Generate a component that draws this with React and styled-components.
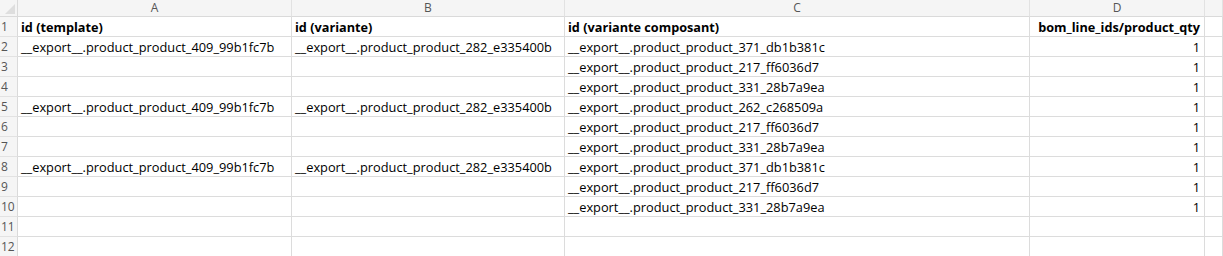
import React from "react";
import styled, { createGlobalStyle } from "styled-components";

const Global = createGlobalStyle`
  html, body {
    margin: 0;
    padding: 0;
    background: #ffffff;
  }
  body {
    font-family: "Open Sans", "Liberation Sans", sans-serif;
  }
`;

const Sheet = styled.div`
  display: grid;
  grid-template-columns: 18px 274px 273px 465px 175px 1fr;
  grid-template-rows: 17px;
  grid-auto-rows: 20px;
  width: 1223px;
  height: 256px;
  overflow: hidden;
`;

const Corner = styled.div`
  position: relative;
  background: #f5f5f5;
  border-right: 1px solid #dadada;
  border-bottom: 1px solid #dadada;
  box-sizing: border-box;
  &::after {
    content: "";
    position: absolute;
    right: 2px;
    bottom: 2px;
    width: 0;
    height: 0;
    border-left: 10px solid transparent;
    border-bottom: 10px solid #dedede;
  }
`;

const ColHead = styled.div`
  display: flex;
  align-items: center;
  justify-content: center;
  background: #f5f5f5;
  border-right: 1px solid #e2e2e2;
  border-bottom: 1px solid #dadada;
  box-sizing: border-box;
  color: #555;
  font-size: 12px;
  line-height: 1;
`;

const RowHead = styled.div`
  display: flex;
  align-items: center;
  padding-left: 1px;
  background: #f5f5f5;
  border-right: 1px solid #dadada;
  border-bottom: 1px solid #e2e2e2;
  box-sizing: border-box;
  color: #555;
  font-size: 12px;
  overflow: visible;
  white-space: nowrap;
`;

const Cell = styled.div`
  display: flex;
  align-items: center;
  justify-content: ${(p) => (p.$num ? "flex-end" : "flex-start")};
  padding: 0 ${(p) => (p.$num ? "4px" : "3px")};
  border-right: 1px solid #dcdcdc;
  border-bottom: 1px solid #dcdcdc;
  box-sizing: border-box;
  color: #000;
  font-size: ${(p) => (p.$bold ? "12.7px" : "12.8px")};
  font-weight: ${(p) => (p.$bold ? 700 : 400)};
  white-space: nowrap;
  overflow: hidden;
`;

const header = ["id (template)", "id (variante)", "id (variante composant)", "bom_line_ids/product_qty", ""];

const T = "__export__.product_product_409_99b1fc7b";
const V = "__export__.product_product_282_e335400b";

const rows = [
  [T, V, "__export__.product_product_371_db1b381c", "1"],
  ["", "", "__export__.product_product_217_ff6036d7", "1"],
  ["", "", "__export__.product_product_331_28b7a9ea", "1"],
  [T, V, "__export__.product_product_262_c268509a", "1"],
  ["", "", "__export__.product_product_217_ff6036d7", "1"],
  ["", "", "__export__.product_product_331_28b7a9ea", "1"],
  [T, V, "__export__.product_product_371_db1b381c", "1"],
  ["", "", "__export__.product_product_217_ff6036d7", "1"],
  ["", "", "__export__.product_product_331_28b7a9ea", "1"],
  ["", "", "", ""],
  ["", "", "", ""],
];

export default function App() {
  return (
    <>
      <Global />
      <Sheet>
        <Corner />
        {["A", "B", "C", "D", ""].map((c, i) => (
          <ColHead key={i}>{c}</ColHead>
        ))}

        <RowHead>1</RowHead>
        {header.map((h, i) => (
          <Cell key={i} $bold $num={i === 3}>
            {h}
          </Cell>
        ))}

        {rows.map((r, ri) => (
          <React.Fragment key={ri}>
            <RowHead>{ri + 2}</RowHead>
            {r.map((v, ci) => (
              <Cell key={ci} $num={ci === 3}>
                {v}
              </Cell>
            ))}
            <Cell />
          </React.Fragment>
        ))}
      </Sheet>
    </>
  );
}
